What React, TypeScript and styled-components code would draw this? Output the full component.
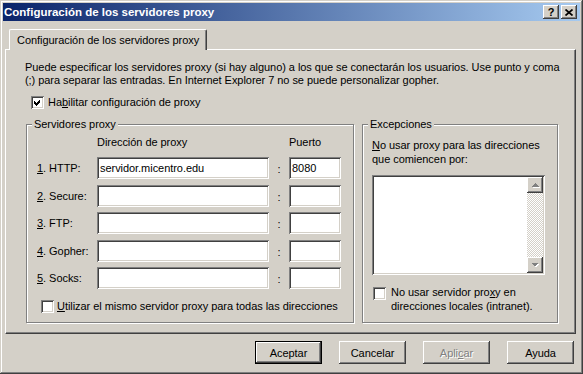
import React from "react";
import styled, { createGlobalStyle } from "styled-components";

const face = "#D4D0C8";
const shadow = "#808080";
const dark = "#404040";

const raised = `box-shadow: inset -1px -1px ${dark}, inset 1px 1px #fff, inset -2px -2px ${shadow}, inset 2px 2px ${face};`;
const sunken = `box-shadow: inset 1px 1px ${shadow}, inset -1px -1px #fff, inset 2px 2px ${dark}, inset -2px -2px ${face};`;

const GlobalStyle = createGlobalStyle`
  html, body {
    margin: 0;
    padding: 0;
    background: ${face};
  }
  body {
    font-family: "Liberation Sans", Arial, sans-serif;
    font-size: 11px;
    letter-spacing: -0.05px;
    color: #000;
  }
`;

const Window = styled.div`
  width: 583px;
  height: 374px;
  box-sizing: border-box;
  padding: 3px;
  background: ${face};
  box-shadow: inset -1px -1px ${dark}, inset 1px 1px ${face}, inset -2px -2px ${shadow}, inset 2px 2px #fff;
  display: flex;
  flex-direction: column;
`;

const TitleBar = styled.div`
  height: 18px;
  display: flex;
  align-items: center;
  padding: 0 3px 0 1px;
  background: linear-gradient(to right, #0a246a, #a6caf0);
  color: #fff;
  font-weight: bold;
  font-size: 11.5px;
  letter-spacing: 0;
`;

const TitleText = styled.span`
  flex: 1;
  white-space: nowrap;
`;

const TitleButtons = styled.div`
  display: flex;
  gap: 2px;
`;

const TitleButton = styled.div`
  width: 16px;
  height: 14px;
  box-sizing: border-box;
  background: ${face};
  ${raised}
  display: flex;
  align-items: center;
  justify-content: center;
  color: #000;
  font-size: 11px;
  font-weight: bold;
  line-height: 14px;
`;

const Body = styled.div`
  display: flex;
  flex-direction: column;
  padding: 8px 4px 0 2px;
`;

const TabStrip = styled.div`
  display: flex;
  padding-left: 4px;
  position: relative;
  z-index: 1;
`;

const Tab = styled.div`
  height: 21px;
  margin-bottom: -1px;
  box-sizing: border-box;
  padding: 0 7px 0 7px;
  background: ${face};
  border-top: 1px solid #fff;
  border-left: 1px solid #fff;
  border-right: 1px solid ${dark};
  box-shadow: inset -1px 0 ${shadow};
  border-radius: 2px 2px 0 0;
  display: flex;
  align-items: center;
  white-space: nowrap;
`;

const Panel = styled.div`
  height: 285px;
  box-sizing: border-box;
  border-top: 1px solid #fff;
  border-left: 1px solid #fff;
  border-right: 1px solid ${dark};
  border-bottom: 1px solid ${dark};
  box-shadow: inset -1px -1px ${shadow};
  padding: 11px 16px 0 19px;
`;

const Description = styled.p`
  margin: 0;
  line-height: 13px;
  white-space: nowrap;
`;

const CheckRow = styled.label<{ $top: number; $left: number; $gap: number }>`
  display: flex;
  align-items: center;
  gap: ${(p) => p.$gap}px;
  margin: ${(p) => p.$top}px 0 0 ${(p) => p.$left}px;
  line-height: 13px;
  white-space: nowrap;
`;

const CheckBox = styled.span`
  width: 13px;
  height: 13px;
  flex: none;
  box-sizing: border-box;
  background: #fff;
  ${sunken}
  display: block;
`;

const GroupsRow = styled.div`
  display: flex;
  gap: 8px;
  margin: 15px 0 0 1px;
`;

const Group = styled.div<{ $width: number; $pad: string }>`
  position: relative;
  width: ${(p) => p.$width}px;
  height: 199px;
  box-sizing: border-box;
  border: 1px solid ${shadow};
  box-shadow: 1px 1px 0 #fff, inset 1px 1px 0 #fff;
  padding: ${(p) => p.$pad};
`;

const Legend = styled.span`
  position: absolute;
  top: -7px;
  left: 5px;
  padding: 0 2px;
  background: ${face};
  line-height: 13px;
  white-space: nowrap;
`;

const columns = "60px 172px 20px 52px";

const HeaderRow = styled.div`
  display: grid;
  grid-template-columns: ${columns};
  line-height: 13px;
  white-space: nowrap;
`;

const Rows = styled.div`
  display: flex;
  flex-direction: column;
  gap: 5.5px;
  margin-top: 8px;
`;

const Row = styled.div`
  display: grid;
  grid-template-columns: ${columns};
  align-items: center;
  height: 22px;
`;

const RowLabel = styled.span`
  white-space: nowrap;
`;

const Colon = styled.span`
  text-align: center;
  padding-top: 2px;
`;

const TextBox = styled.div`
  height: 22px;
  box-sizing: border-box;
  background: #fff;
  ${sunken}
  padding: 0 3px;
  display: flex;
  align-items: center;
  white-space: nowrap;
`;

const Note = styled.p`
  margin: 0;
  line-height: 14px;
  white-space: nowrap;
`;

const ListBox = styled.div`
  width: 173px;
  height: 100px;
  margin-top: 9px;
  box-sizing: border-box;
  padding: 2px;
  background: #fff;
  ${sunken}
  display: flex;
  justify-content: flex-end;
`;

const ScrollBar = styled.div`
  width: 16px;
  display: flex;
  flex-direction: column;
`;

const ScrollButton = styled.div`
  width: 16px;
  height: 16px;
  box-sizing: border-box;
  background: ${face};
  ${raised}
  display: flex;
  align-items: center;
  justify-content: center;
`;

const Track = styled.div`
  flex: 1;
  background: repeating-conic-gradient(${face} 0 25%, #fff 0 50%) 0 0 / 2px 2px;
`;

const CheckText = styled.span`
  line-height: 14px;
`;

const Footer = styled.div`
  display: flex;
  justify-content: flex-end;
  gap: 17px;
  margin-top: 7px;
  padding-right: 2px;
`;

const Button = styled.button<{ $default?: boolean }>`
  width: 67px;
  height: 23px;
  box-sizing: border-box;
  padding: 0;
  font-family: inherit;
  font-size: 11px;
  letter-spacing: inherit;
  color: #000;
  background: ${face};
  border: ${(p) => (p.$default ? "1px solid #000" : "none")};
  ${raised}
  &:disabled {
    color: ${shadow};
    text-shadow: 1px 1px 0 #fff;
  }
`;

const Check = () => (
  <svg width="13" height="13" viewBox="0 0 13 13" shapeRendering="crispEdges">
    <path d="M3 5 L5 7 L9 3 L9 6 L5 10 L3 8 Z" fill="#000" />
  </svg>
);

const Arrow = ({ up }: { up?: boolean }) => (
  <svg width="9" height="6" viewBox="0 0 9 6" shapeRendering="crispEdges">
    {up ? (
      <>
        <path d="M1.5 5.5 L5 2 L8.5 5.5 Z" fill="#fff" />
        <path d="M0.5 4.5 L4 1 L7.5 4.5 Z" fill={shadow} />
      </>
    ) : (
      <>
        <path d="M1.5 2 L5 5.5 L8.5 2 Z" fill="#fff" />
        <path d="M0.5 1 L4 4.5 L7.5 1 Z" fill={shadow} />
      </>
    )}
  </svg>
);

const CloseGlyph = () => (
  <svg width="8" height="7" viewBox="0 0 8 7">
    <path d="M0.5 0.5 L7.5 6.5 M7.5 0.5 L0.5 6.5" stroke="#000" strokeWidth="1.7" />
  </svg>
);

const proxies = [
  { key: "1", rest: ". HTTP:", host: "servidor.micentro.edu", port: "8080" },
  { key: "2", rest: ". Secure:", host: "", port: "" },
  { key: "3", rest: ". FTP:", host: "", port: "" },
  { key: "4", rest: ". Gopher:", host: "", port: "" },
  { key: "5", rest: ". Socks:", host: "", port: "" },
];

export default function App() {
  return (
    <>
      <GlobalStyle />
      <Window>
        <TitleBar>
          <TitleText>Configuración de los servidores proxy</TitleText>
          <TitleButtons>
            <TitleButton>?</TitleButton>
            <TitleButton>
              <CloseGlyph />
            </TitleButton>
          </TitleButtons>
        </TitleBar>
        <Body>
          <TabStrip>
            <Tab>Configuración de los servidores proxy</Tab>
          </TabStrip>
          <Panel>
            <Description>
              Puede especificar los servidores proxy (si hay alguno) a los que se conectarán los usuarios. Use punto y coma
              <br />
              (;) para separar las entradas. En Internet Explorer 7 no se puede personalizar gopher.
            </Description>
            <CheckRow $top={9} $left={6} $gap={4}>
              <CheckBox>
                <Check />
              </CheckBox>
              <span>
                Ha<u>b</u>ilitar configuración de proxy
              </span>
            </CheckRow>
            <GroupsRow>
              <Group $width={328} $pad="11px 11px 0 10px">
                <Legend>Servidores proxy</Legend>
                <HeaderRow>
                  <span />
                  <span>Dirección de proxy</span>
                  <span />
                  <span>Puerto</span>
                </HeaderRow>
                <Rows>
                  {proxies.map((p) => (
                    <Row key={p.key}>
                      <RowLabel>
                        <u>{p.key}</u>
                        {p.rest}
                      </RowLabel>
                      <TextBox>{p.host}</TextBox>
                      <Colon>:</Colon>
                      <TextBox>{p.port}</TextBox>
                    </Row>
                  ))}
                </Rows>
                <CheckRow $top={11} $left={4} $gap={3}>
                  <CheckBox />
                  <span>
                    <u>U</u>tilizar el mismo servidor proxy para todas las direcciones
                  </span>
                </CheckRow>
              </Group>
              <Group $width={196} $pad="13px 10px 0 9px">
                <Legend>Excepciones</Legend>
                <Note>
                  <u>N</u>o usar proxy para las direcciones
                  <br />
                  que comiencen por:
                </Note>
                <ListBox>
                  <ScrollBar>
                    <ScrollButton>
                      <Arrow up />
                    </ScrollButton>
                    <Track />
                    <ScrollButton>
                      <Arrow />
                    </ScrollButton>
                  </ScrollBar>
                </ListBox>
                <CheckRow as="div" $top={10} $left={1} $gap={5} style={{ alignItems: "flex-start" }}>
                  <CheckBox style={{ marginTop: 2 }} />
                  <CheckText>
                    No usar servidor pro<u>x</u>y en
                    <br />
                    direcciones locales (intranet).
                  </CheckText>
                </CheckRow>
              </Group>
            </GroupsRow>
          </Panel>
          <Footer>
            <Button $default>Aceptar</Button>
            <Button>Cancelar</Button>
            <Button disabled>
              Apli<u>c</u>ar
            </Button>
            <Button>Ayuda</Button>
          </Footer>
        </Body>
      </Window>
    </>
  );
}
